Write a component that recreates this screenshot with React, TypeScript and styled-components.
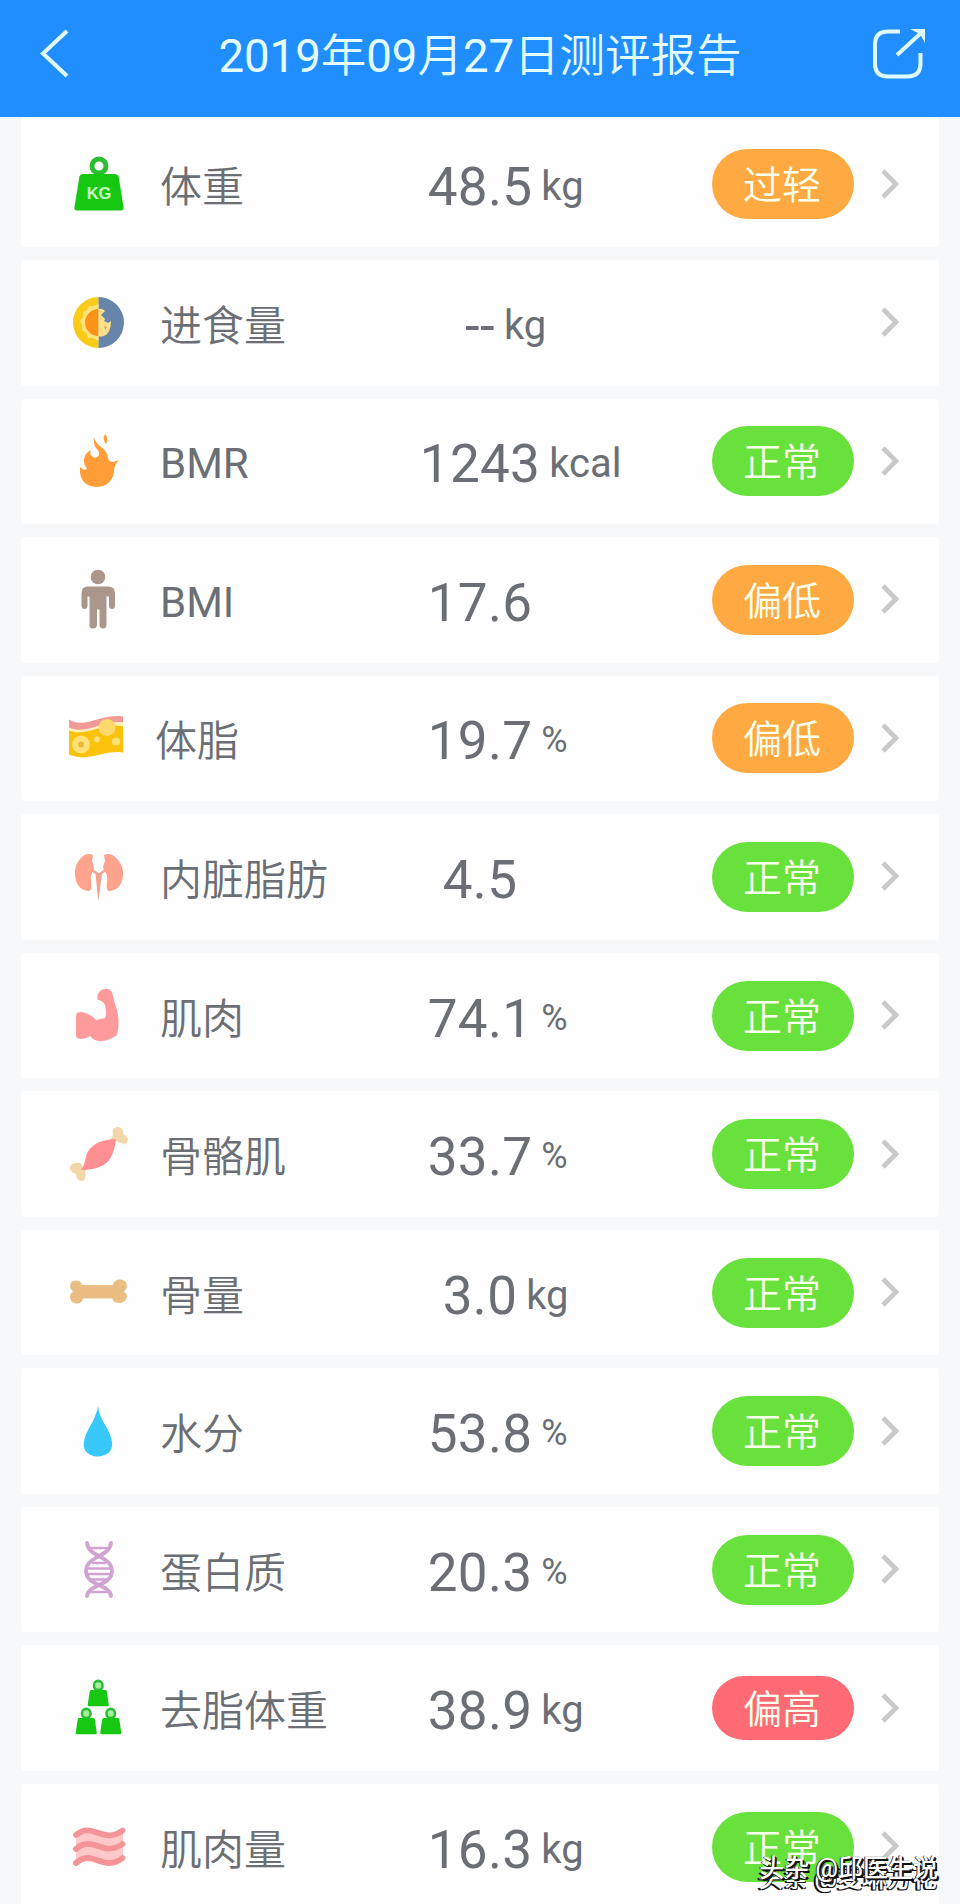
import React from "react";
import styled, { createGlobalStyle } from "styled-components";

const GlobalStyle = createGlobalStyle`
  * { box-sizing: border-box; }
  body { margin: 0; background: #f7f8fb; }
`;

const Page = styled.div`
  position: relative;
  width: 960px;
  height: 1904px;
  overflow: hidden;
  background: #f7f8fa;
  font-family: Roboto, "Noto Sans CJK SC", sans-serif;
  color: #6b6f75;
`;

const Header = styled.header`
  height: 117px;
  padding: 0 35px;
  background: #218eff;
  display: flex;
  align-items: center;
  justify-content: space-between;
`;

const Title = styled.h1`
  margin: 0;
  padding-bottom: 4px;
  font-size: 45.5px;
  line-height: 60px;
  font-weight: 350;
  color: #e4feff;
  white-space: nowrap;
`;

const Digits = styled.span`
  font-weight: 400;
`;

const HeaderIcon = styled.svg`
  width: 56px;
  height: 56px;
  margin-bottom: 12px;
  fill: none;
  stroke: #dffaff;
`;

const List = styled.main`
  display: flex;
  flex-direction: column;
  gap: 13px;
  padding: 0 21px;
`;

const Card = styled.section<{ $first?: boolean }>`
  flex: none;
  height: ${(p) => (p.$first ? 130 : 125.55)}px;
  padding: ${(p) => (p.$first ? 4.45 : 0)}px 36px 0 46px;
  border-radius: 3px;
  background: #fefefe;
  display: grid;
  grid-template-columns: 64px 232px 234px 115px 142px 1fr;
  align-items: center;
`;

const Icon = styled.svg`
  width: 64px;
  height: 64px;
  display: block;
`;

const Label = styled.div<{ $inset: number; $latin: boolean }>`
  padding: ${(p) => (p.$latin ? 6 : 8)}px 0 0 ${(p) => p.$inset}px;
  font-size: 42px;
  font-weight: ${(p) => (p.$latin ? 400 : 350)};
  line-height: 60px;
  white-space: nowrap;
`;

const Reading = styled.div`
  display: grid;
  grid-template-columns: 1fr auto 1fr;
  align-items: baseline;
  white-space: nowrap;
  padding-top: 6px;
`;

const Value = styled.span`
  grid-column: 2;
  font-size: 53px;
  line-height: 62px;
  letter-spacing: 0.3px;
`;

const Unit = styled.span<{ $small: boolean }>`
  width: 0;
  padding-left: 9px;
  font-size: ${(p) => (p.$small ? 36 : 40)}px;
  line-height: 40px;
  position: relative;
  top: ${(p) => (p.$small ? -7 : -5)}px;
`;

const tones = { low: "#ffa943", ok: "#69e13c", high: "#ff6b74" };

const Badge = styled.div<{ $tone: keyof typeof tones }>`
  grid-column: 5;
  width: 142px;
  height: ${(p) => (p.$tone === "high" ? 64 : 70)}px;
  padding-right: 2px;
  border-radius: 35px;
  background: ${(p) => tones[p.$tone]};
  color: #fbffec;
  font-size: 39px;
  font-weight: 350;
  line-height: ${(p) => (p.$tone === "high" ? 69 : 75)}px;
  text-align: center;
`;

const Chevron = styled.svg`
  grid-column: 6;
  justify-self: end;
  width: 24px;
  height: 34px;
  margin-bottom: 1px;
  fill: none;
  stroke: #c9c9c9;
  stroke-width: 4.6;
`;

const Watermark = styled.div`
  position: absolute;
  right: 22px;
  bottom: 18px;
  font-size: 25px;
  line-height: 34px;
  font-weight: 500;
  white-space: nowrap;
  color: #fff;
  text-shadow: 1px 1px 0 #111, -1px 0 0 #333, 2px 2px 0 #111;
`;

const WatermarkEcho = styled(Watermark)`
  bottom: 8px;
  right: 23px;
  text-shadow: -1px 1px 0 #111, -2px 1px 0 #111, 1px 1px 0 #222;
`;

const icons: Record<string, React.ReactNode> = {
  weight: (
    <>
      <circle cx="32" cy="14" r="7" fill="none" stroke="#2dbd35" strokeWidth="5" />
      <path d="M16 22H48Q51 22 51.6 24.500L56.500 55Q57 58.500 54 58.500H10Q7 58.500 7.500 55L12.400 24.500Q13 22 16 22Z" fill="#16c812" />
      <text x="32" y="46.5" textAnchor="middle" fontFamily="Liberation Sans" fontWeight="700" fontSize="16.5" fill="#c8ffc4">KG</text>
    </>
  ),
  food: (
    <>
      <path d="M31.500 6A25.500 25.500 0 0 0 31.500 57Z" fill="#f9cb18" />
      <path d="M31.500 6A25.500 25.500 0 0 1 31.500 57Z" fill="#6685a8" />
      <path d="M31.500 13L26 15L22 15L20 19L16 21L16 26L13 30L15 34L15 39L19 42L21 47L26 47L31.500 50Z" fill="#ffe27a" />
      <path d="M31.500 18A13 13 0 0 0 31.500 45Z" fill="#fb9318" />
      <path d="M31.500 18Q35 17 38 20L34 24L38 28L37 30L41 32L44 30Q44 42 37 45Q34 46 31.500 45Z" fill="#ffdf8b" />
      <path d="M37 35l3 1-2 3z" fill="#dca957" />
    </>
  ),
  flame: (
    <path d="M27 8C28 17 40 18 41 29Q42 33 46 33L52 31Q47 36 47 43Q44 58 29 58Q15 57 13 44V38Q17 42 20 40Q16 34 17 30Q18 24 24 21Q22 26 26 28Q30 30 32 26Q33 23 29 19Q26 15 27 8ZM38 5Q35 10 39 15Q42 10 38 5Z" fill="#ff9e39" />
  ),
  person: (
    <g fill="#ab968c" transform="translate(0 1.500)">
      <circle cx="31" cy="7.5" r="7.300" />
      <path d="M20.500 17H41.500Q48 17 48 24V36Q48 39.500 45 39.500T42 36V27H39.500V55Q39.500 59 36 59T32.500 55V40H30V55Q30 59 26 59T22.500 55V27H20.500V36Q20.500 39.500 17.500 39.500T14.500 36V24Q14.500 17 20.500 17Z" />
    </g>
  ),
  fat: (
    <g transform="translate(0 1.500)">
      <path d="M2 12C15 25 35 6 56 10V45C38 42 22 56 2 47Z" fill="#fff2b7" />
      <path d="M2 12C18 22 34 6 56 9V15C37 12 20 28 2 20Z" fill="#f19a98" />
      <path d="M2 23C20 30 36 14 56 19V45C36 42 22 55 2 47Z" fill="#fac20b" />
      <circle cx="40" cy="20" r="8.500" fill="#ffd96b" />
      <circle cx="14" cy="37" r="9" fill="#ffe179" />
      <circle cx="14" cy="37" r="3" fill="#e9bc37" />
      <circle cx="30" cy="32" r="3" fill="#ffe179" />
      <circle cx="49" cy="34" r="4" fill="#ffe179" />
    </g>
  ),
  kidneys: (
    <>
      <path d="M26 10Q19 7 13 14Q7 21 8 31Q10 46 23 46Q25 43 24 37Q23 31 26 26L27 22L25 16Z" fill="#ffa38d" />
      <path d="M37 10Q44 7 50 14Q57 21 56 31Q54 46 41 46Q39 43 40 37Q41 31 38 26L36 22L38 16Z" fill="#ffa38d" />
      <path d="M25 25L30.500 29M38.500 25L33 29" fill="none" stroke="#f2a28d" strokeWidth="2.600" />
      <path d="M28.500 28H35L33 44L31.500 56L30 44Z" fill="#f2a28d" />
    </>
  ),
  arm: (
    <path d="M9 32Q9 28 14 28Q23 29 29 36L38 34Q40 30 38 21Q35 16 31 16Q29 11 33 7Q40 2 45 8L48 20Q54 35 50 51Q42 57 33 57Q27 57 23 52Q19 55 14 55Q9 55 9 51Z" fill="#ff9a9c" />
  ),
  muscleBone: (
    <>
      <g fill="#f1d7a7">
        <path d="M43 18L46 14Q44 6 50 5Q57 5 56 12Q63 15 60 21Q56 23 49 19L45 22Z" />
        <path d="M18 43L15 46Q16 40 9 41Q2 41 3 48Q5 51 9 52Q10 60 16 59Q20 56 18 50L21 46Z" />
      </g>
      <path d="M49 17Q48 28 43 37Q35 48 14 48Q18 42 19 34Q24 18 49 17Z" fill="#ff8f92" />
    </>
  ),
  bone: (
    <path transform="translate(0 -2.500)" d="M15 26.500H46Q47 21 53 21Q60 21 60 28Q60 31 57 33Q60 35 60 38Q59 44.500 53 44.500Q47 44.500 45 40H16Q15 45 9 45Q3 44 3 38Q3 35 6 33Q3 31 3 28Q3 22 9 22Q14 22 15 26.500Z" fill="#eabd83" />
  ),
  drop: <path d="M31 7Q31.500 16 40.500 30Q51 51 37.500 56Q31 59 23.500 56Q11 50 21.500 30Q29.500 17 31 7Z" fill="#38c8fa" />,
  dna: (
    <g fill="none" stroke="#d0a3d2" strokeWidth="3.800" strokeLinecap="round">
      <path d="M20 5C21 19 45 18 45 33S21 46 20 58M44 5C43 19 19 18 19 33S43 46 44 58" />
      <path d="M24 10H40M26 25H38M21 30.500H43M21 36H43M25 41.500H39M24 54H40" strokeWidth="2.400" />
    </g>
  ),
  weights: (
    <>
      {[[20.5, 4], [8.500, 32], [33, 32]].map(([x, y]) => (
        <g key={`${x}-${y}`} transform={`translate(${x} ${y}) scale(.43 .46) translate(-7 -2)`}>
          <circle cx="32" cy="14" r="10" fill="#a8ef9b" stroke="#2dbd35" strokeWidth="6" />
          <path d="M14 24H50L52 27L56.500 56Q57 59 54 59H10Q7 59 7.500 56L12 27Z" fill="#16c812" />
        </g>
      ))}
    </>
  ),
  strips: (
    <>
      <path d="M9 20C26 6 36 30 56 15V41C38 56 23 30 9 48Z" fill="#ffc9ca" />
      <path d="M9 20C26 6 36 30 55.500 15.500M9 34C26 19 36 43 55.500 29M9 48C26 33 36 58 55.500 43" fill="none" stroke="#f49499" strokeWidth="5.800" strokeLinecap="round" />
    </>
  ),
};

type Row = {
  icon: string;
  label: string;
  value: string;
  unit?: string;
  tone?: keyof typeof tones;
  status?: string;
};

const rows: Row[] = [
  { icon: "weight", label: "体重", value: "48.5", unit: "kg", tone: "low", status: "过轻" },
  { icon: "food", label: "进食量", value: "--", unit: "kg" },
  { icon: "flame", label: "BMR", value: "1243", unit: "kcal", tone: "ok", status: "正常" },
  { icon: "person", label: "BMI", value: "17.6", tone: "low", status: "偏低" },
  { icon: "fat", label: "体脂", value: "19.7", unit: "%", tone: "low", status: "偏低" },
  { icon: "kidneys", label: "内脏脂肪", value: "4.5", tone: "ok", status: "正常" },
  { icon: "arm", label: "肌肉", value: "74.1", unit: "%", tone: "ok", status: "正常" },
  { icon: "muscleBone", label: "骨骼肌", value: "33.7", unit: "%", tone: "ok", status: "正常" },
  { icon: "bone", label: "骨量", value: "3.0", unit: "kg", tone: "ok", status: "正常" },
  { icon: "drop", label: "水分", value: "53.8", unit: "%", tone: "ok", status: "正常" },
  { icon: "dna", label: "蛋白质", value: "20.3", unit: "%", tone: "ok", status: "正常" },
  { icon: "weights", label: "去脂体重", value: "38.9", unit: "kg", tone: "high", status: "偏高" },
  { icon: "strips", label: "肌肉量", value: "16.3", unit: "kg", tone: "ok", status: "正常" },
];

export default function App() {
  return (
    <Page>
      <GlobalStyle />
      <Header>
        <HeaderIcon viewBox="0 0 56 56" strokeWidth="4">
          <path d="M32 6L8 28.500L32 51" />
        </HeaderIcon>
        <Title>
          <Digits>2019</Digits>年<Digits>09</Digits>月<Digits>27</Digits>日测评报告
        </Title>
        <HeaderIcon viewBox="0 0 56 56" strokeWidth="4">
          <path d="M31 6.500H19Q6 6.500 6 19.500V38.500Q6 51.500 19 51.500H38Q51.500 51.500 51.500 38.500V28M28 30L52 8" />
          <path d="M41 4H56V18L51 9Z" fill="#dffaff" stroke="none" />
        </HeaderIcon>
      </Header>
      <List>
        {rows.map((row, i) => (
          <Card key={row.label} $first={i === 0}>
            <Icon viewBox="0 0 64 64">{icons[row.icon]}</Icon>
            <Label $inset={row.icon === "fat" ? 24 : 29} $latin={/^[A-Z]+$/.test(row.label)}>
              {row.label}
            </Label>
            <Reading>
              <Value>{row.value}</Value>
              {row.unit && <Unit $small={row.unit === "%"}>{row.unit}</Unit>}
            </Reading>
            {row.tone && <Badge $tone={row.tone}>{row.status}</Badge>}
            <Chevron viewBox="0 0 24 34">
              <path d="M4 4L17 17L4 30" />
            </Chevron>
          </Card>
        ))}
      </List>
      <WatermarkEcho>头条 @麦琳方花</WatermarkEcho>
      <Watermark>头杂 @邱医生说</Watermark>
    </Page>
  );
}
